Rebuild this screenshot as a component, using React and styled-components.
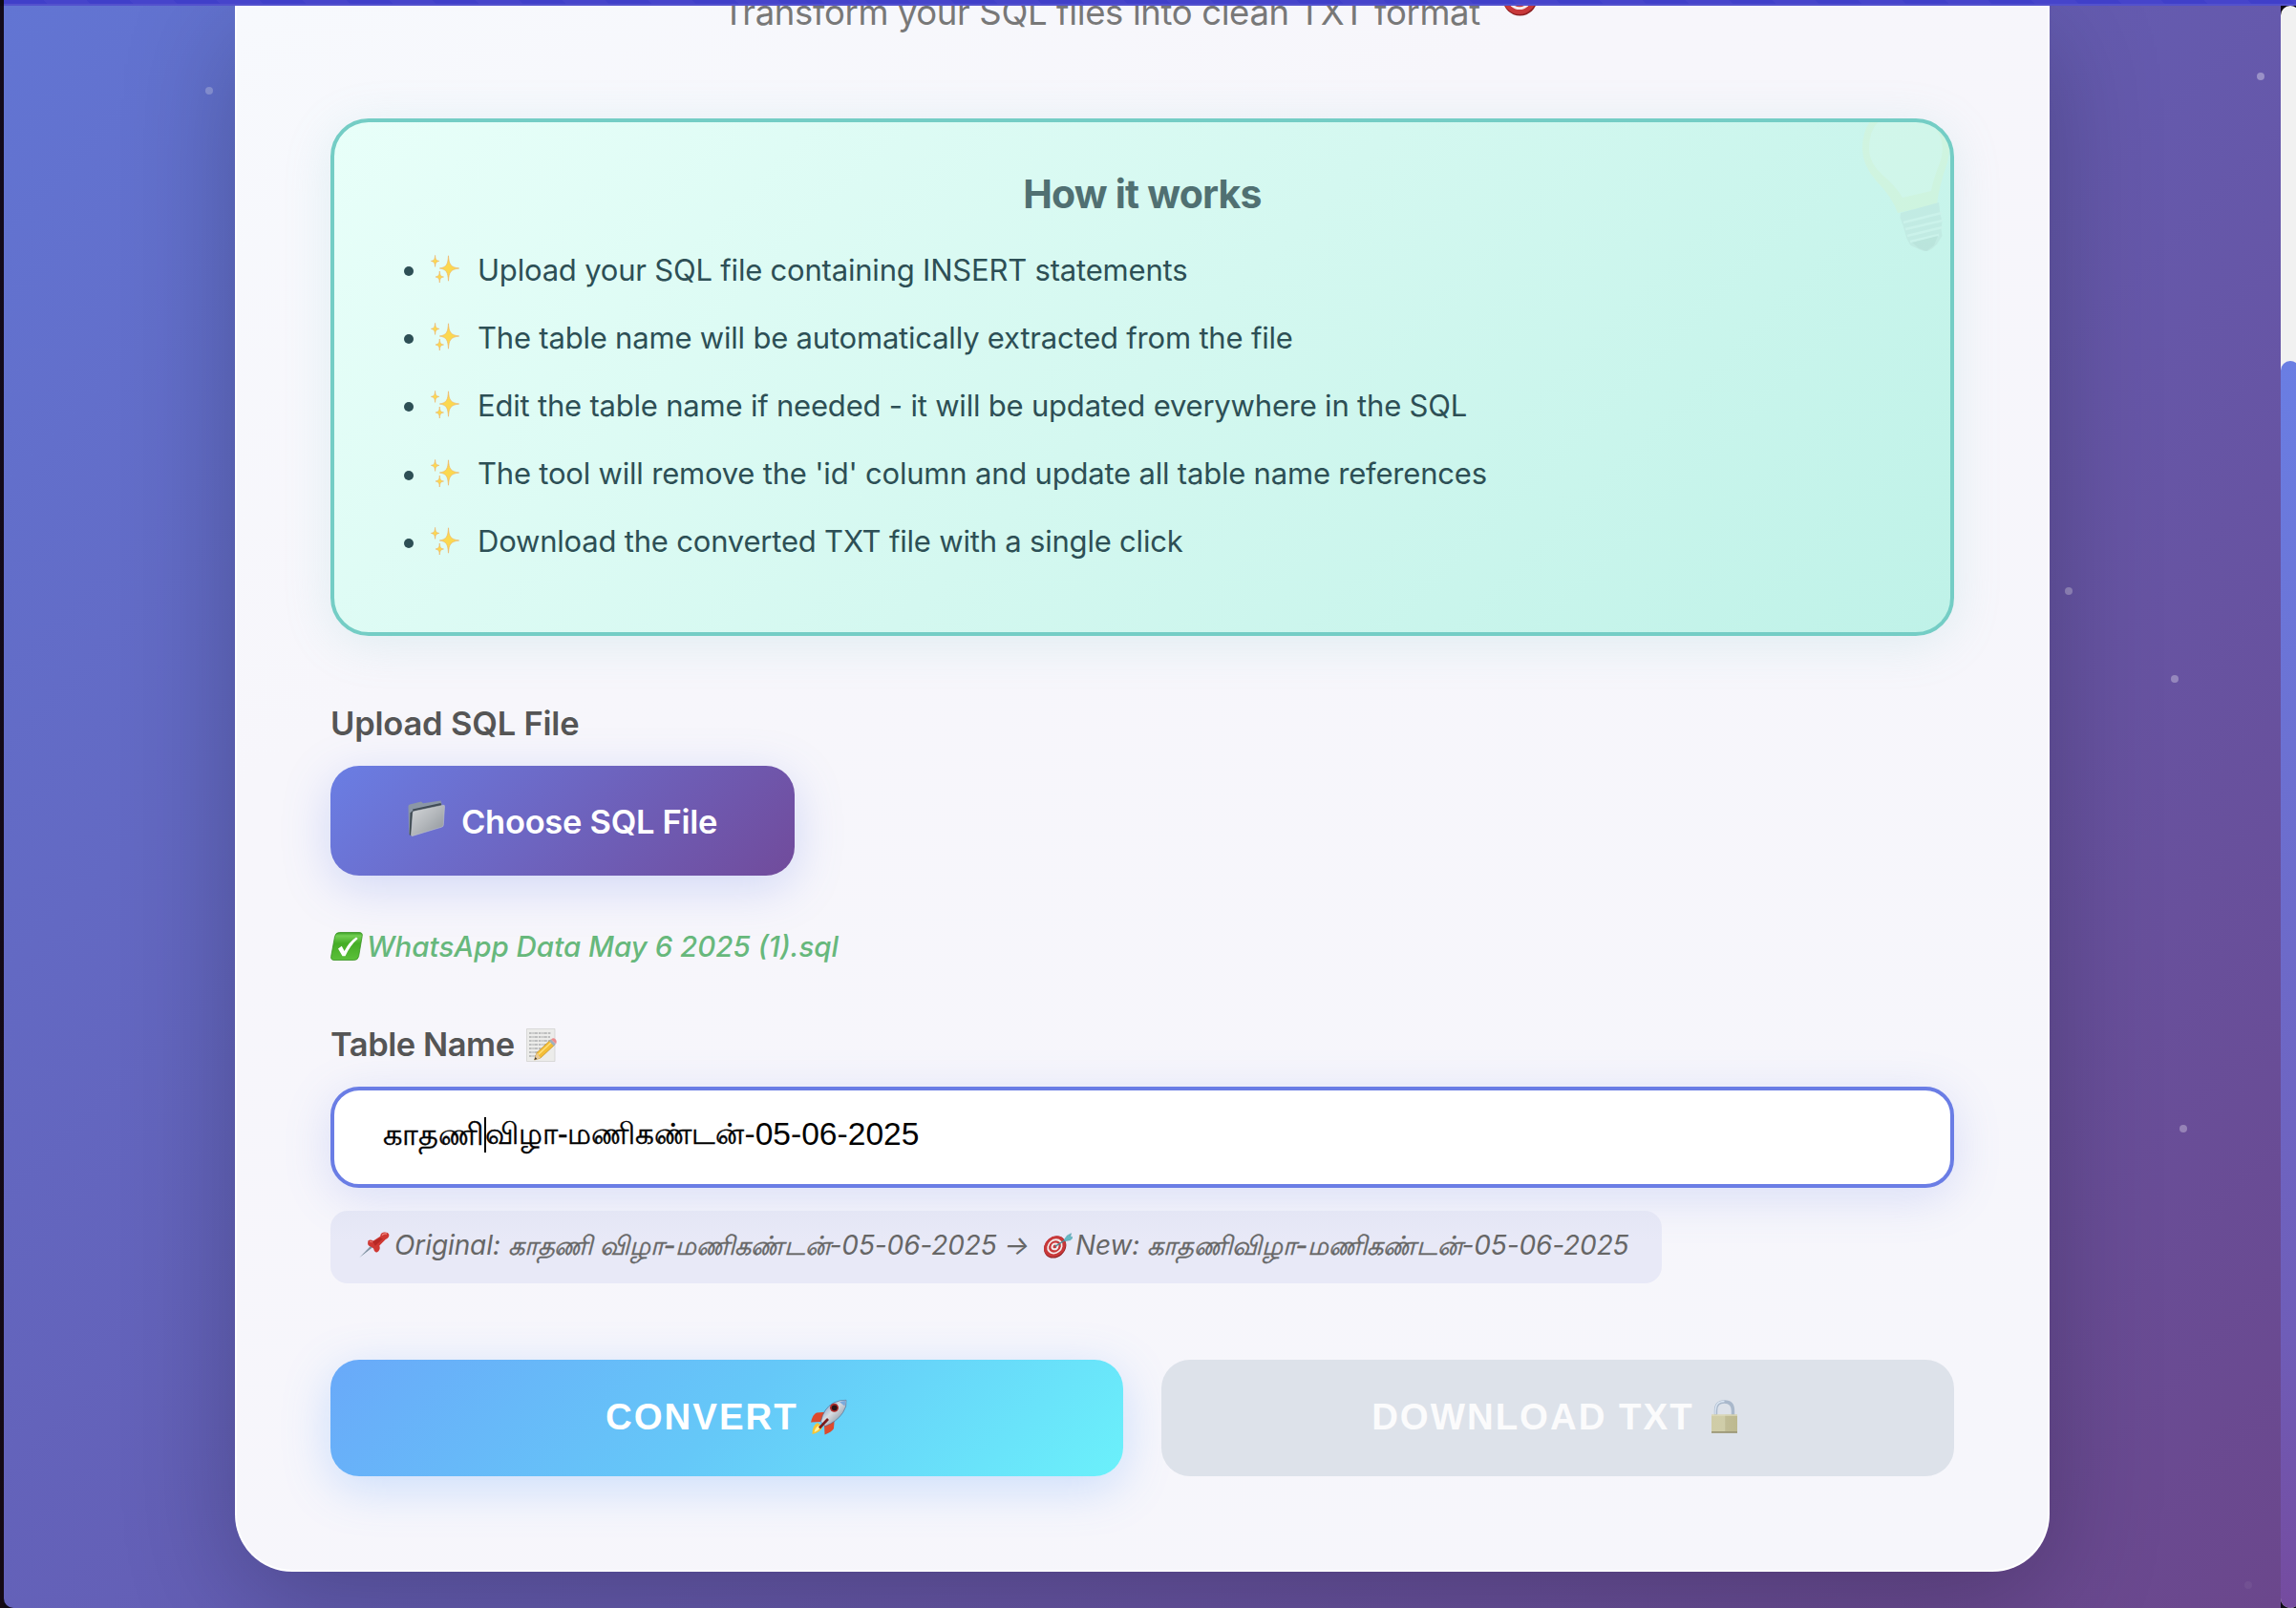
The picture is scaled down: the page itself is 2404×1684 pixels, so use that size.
import React from "react";
import styled, { createGlobalStyle, css } from "styled-components";

const sans = `Inter, "Noto Sans", "Liberation Sans", sans-serif`;
const arial = `"Liberation Sans", Arial, "Noto Sans", sans-serif`;

const GlobalStyle = createGlobalStyle`
  *, *::before, *::after { box-sizing: border-box; }
  body { margin: 0; background: #0e0a16; font-family: ${sans}; overflow: hidden; }
  svg { display: block; flex: none; }
`;

/* ---------- frame ---------- */

const Frame = styled.div`
  width: 2404px;
  height: 1684px;
  overflow: hidden;
  display: grid;
  grid-template-rows: 6px 1fr;
  background: #0e0a16;
`;

const TopBar = styled.div`
  margin-left: 4px;
  border-bottom: 2px solid #5351cd;
  background: repeating-linear-gradient(45deg, #403fc9 0 32px, #4644cb 32px 64px);
`;

const Viewport = styled.div`
  display: grid;
  grid-template-columns: 4px 2384px 20px;
  min-height: 0;
`;

const WindowEdge = styled.div`
  background: linear-gradient(#130b1b, #150a14);
`;

const Page = styled.main`
  position: relative;
  overflow: hidden;
  border-bottom-left-radius: 10px;
  padding: 0 242px 38px;
  background: linear-gradient(135deg, #6275d3 0%, #645db3 50%, #6b478c 100%);
`;

const Star = styled.i`
  position: absolute;
  left: ${(p) => p.$x}px;
  top: ${(p) => p.$y}px;
  width: 8px;
  height: 8px;
  border-radius: 50%;
  background: rgba(255, 255, 255, ${(p) => p.$alpha});
`;

const ScrollTrack = styled.div`
  padding-top: 372px;
  border-radius: 10px;
  background: #f1f1f1;
`;

const ScrollThumb = styled.div`
  height: 1306px;
  border-radius: 10px;
  background: linear-gradient(180deg, #6a7ee3, #6f5db8 78%, #754b9f);
`;

/* ---------- card ---------- */

const Card = styled.section`
  position: relative;
  height: 1640px;
  padding: 0 98px;
  border: 2px solid rgba(255, 255, 255, 0.95);
  border-top: 0;
  border-radius: 0 0 60px 60px;
  background: linear-gradient(150deg, #f7f9fd 0%, #f7f6fb 30%, #f6f6fb 100%);
  box-shadow: 0 30px 120px rgba(0, 0, 0, 0.24);
`;

const Header = styled.header`
  height: 118px;
  overflow: hidden;
`;

const Subtitle = styled.p`
  display: flex;
  justify-content: center;
  gap: 22px;
  margin: -13px 0 0;
  font-size: 36.5px;
  line-height: 40px;
  letter-spacing: -0.37px;
  color: #787878;
  white-space: nowrap;

  svg { margin: -18px 14px 0 0; }
`;

const InfoBox = styled.section`
  position: relative;
  height: 542px;
  padding-top: 51px;
  overflow: hidden;
  border: 4px solid #74cdc5;
  border-radius: 40px;
  background: linear-gradient(135deg, #e8fff9 0%, #d4f8f0 50%, #bff2e8 100%);
`;

const InfoShadow = styled.div`
  border-radius: 40px;
  box-shadow: 0 8px 50px rgba(120, 200, 200, 0.18);
`;

const InfoTitle = styled.h3`
  margin: 0;
  font-size: 41px;
  font-weight: 700;
  line-height: 48px;
  letter-spacing: -0.8px;
  text-align: center;
  color: #507072;
`;

const Steps = styled.ul`
  margin: 19.5px 0 0;
  padding: 0 0 0 73px;
  list-style: none;
`;

const Step = styled.li`
  display: flex;
  align-items: center;
  height: 71.2px;
  font-size: 31px;
  line-height: 71.2px;
  letter-spacing: -0.2px;
  color: #2d4f55;

  &::before {
    content: "";
    width: 10px;
    height: 10px;
    margin: 4px 18px 0 0;
    border-radius: 50%;
    background: currentColor;
  }

  svg { margin-right: 19px; }
`;

const BulbCorner = styled.div`
  position: absolute;
  top: -17px;
  right: -3px;
  opacity: 0.17;
`;

/* ---------- form ---------- */

const Label = styled.label`
  display: flex;
  align-items: center;
  gap: 12px;
  height: 44px;
  margin-top: ${(p) => p.$top}px;
  font-size: 34.5px;
  font-weight: 600;
  line-height: 44px;
  letter-spacing: ${(p) => p.$tracking}px;
  color: #555;
`;

const FileButton = styled.button`
  display: flex;
  align-items: center;
  gap: 17px;
  width: 486px;
  height: 115px;
  margin-top: 21.6px;
  padding: 0 0 0 81px;
  border: 0;
  border-radius: 30px;
  background: linear-gradient(135deg, #6a7ee4 0%, #6e5cb4 65%, #714b9b 100%);
  box-shadow: 0 12px 50px rgba(102, 126, 234, 0.26);
  font: 600 34.5px/44px ${sans};
  letter-spacing: -0.3px;
  color: #fff;

  span { margin-top: 3px; }
  svg { margin-top: -4px; }
`;

const FileName = styled.div`
  display: flex;
  align-items: center;
  gap: 4px;
  height: 40px;
  margin-top: 54.3px;
  font-size: 29.5px;
  font-style: italic;
  font-weight: 500;
  line-height: 40px;
  letter-spacing: 0;
  color: #67b87c;
`;

const NameField = styled.div`
  display: flex;
  align-items: center;
  height: 106px;
  margin-top: 21.7px;
  padding: 0 51px 6px;
  border: 4px solid #6a7de5;
  border-radius: 30px;
  background: #fff;
  box-shadow: 0 10px 50px rgba(102, 126, 234, 0.2);
  font-family: ${arial};
  font-size: 33.6px;
  line-height: 44px;
  color: #000;
  white-space: nowrap;
`;

const Caret = styled.i`
  width: 2px;
  height: 37px;
  margin: 1px -1px 0 0;
  background: #000;
`;

const Tamil = styled.span`
  font-size: ${(p) => p.$size}px;
  line-height: 1;
  -webkit-text-stroke: 0.45px currentColor;
`;

const Preview = styled.div`
  display: flex;
  align-items: center;
  width: 1394px;
  height: 76px;
  margin-top: 24px;
  padding: 0 0 3px 30px;
  border-radius: 18px;
  background: linear-gradient(#e4e6f5, #e8e9f7 40%);
  font-size: 28px;
  font-style: italic;
  line-height: 40px;
  letter-spacing: -0.1px;
  color: #666;
  white-space: pre;
`;

const PreviewText = styled.span`
  flex: none;
  width: ${(p) => (p.$width ? `${p.$width}px` : "auto")};
  margin-left: ${(p) => p.$left}px;
`;

const Actions = styled.div`
  display: grid;
  grid-template-columns: 1fr 1fr;
  gap: 40px;
  margin-top: 80px;
`;

const ActionButton = styled.button`
  display: flex;
  align-items: center;
  justify-content: center;
  height: 122px;
  padding: 0 0 1px;
  border: 0;
  border-radius: 30px;
  background: #dde2ea;
  font: 700 38.4px/46px ${arial};
  letter-spacing: 2px;
  color: #fbfbfc;
  white-space: pre;

  ${(p) =>
    p.$primary &&
    css`
      background: linear-gradient(135deg, #69a9f9 0%, #65c8f8 50%, #6bf1fb 100%);
      box-shadow: 0 12px 50px rgba(79, 152, 254, 0.26);
      color: #fff;
    `}
`;

/* ---------- drawings ---------- */

const Sparkles = () => (
  <svg width="30" height="30" viewBox="0 0 30 30" fill="#fbd84f" stroke="#f0ae62" strokeWidth=".6">
    <path d="M18.500.8C19.200 10 20.500 12.700 29.700 14 20.500 15.300 19.200 18 18.500 27.200 17.800 18 16.800 15.300 9.300 14 16.800 12.700 17.800 10 18.500.8z" />
    <path d="M4.600.4c.3 4 .9 5.400 4.200 6-3.300.6-3.900 2-4.200 6-.3-4-.9-5.400-4.200-6 3.300-.6 3.900-2 4.200-6z" />
    <path d="M9.300 17c.3 4 .9 5.400 4.200 6-3.300.6-3.900 2-4.200 6-.3-4-.9-5.400-4.200-6 3.300-.6 3.900-2 4.200-6z" />
  </svg>
);

const Folder = () => (
  <svg width="39" height="38" viewBox="0 0 39 38">
    <defs>
      <linearGradient id="folderFront" x1="0" y1="0" x2="1" y2="1">
        <stop offset="0" stopColor="#d5d8da" />
        <stop offset=".5" stopColor="#b3b7bb" />
        <stop offset="1" stopColor="#8d9398" />
      </linearGradient>
    </defs>
    <path d="M.5 6.500Q.5 5 2 4.600L14 1.500l2 1.800L34.500.4l1.300 4L5 14 2.800 37 1.200 35z" fill="#8b97a6" />
    <path d="M5 9.500 34.500 3l1 3L6 14z" fill="#414c57" />
    <path d="M2.500 13.500 5 11l0 8L3.500 37.500 1.700 36z" fill="#3e4a52" />
    <path d="M5.200 13.500Q5.300 12 6.800 11.600L37 5.200q1.700-.2 1.500 1.400L37.300 26q-.1 1.600-1.600 2.100L5 37.400q-1.600.5-1.500-1.200z" fill="url(#folderFront)" stroke="#c9cdd0" strokeWidth=".5" />
  </svg>
);

const Check = () => (
  <svg width="34" height="30" viewBox="0 0 34 30">
    <defs>
      <linearGradient id="checkFill" x1="0" y1="0" x2="0" y2="1">
        <stop offset="0" stopColor="#3a9f22" />
        <stop offset=".12" stopColor="#72cf53" />
        <stop offset=".4" stopColor="#45ad25" />
        <stop offset="1" stopColor="#5bc03a" />
      </linearGradient>
    </defs>
    <path d="M9.500.5H30q4 0 3.200 4L29.600 25.500q-.8 4-4.800 4H4q-4 0-3.300-4L4.600 4.500Q5.500.5 9.500.5z" fill="url(#checkFill)" stroke="#399323" strokeWidth=".8" />
    <path d="M8 17.500 11.800 14.800l2.800 5.200Q19.500 10.500 27 5.600l1.700 1.300Q20.500 14 15.500 25.300h-3z" fill="#fff" />
  </svg>
);

const Memo = () => (
  <svg width="32" height="35" viewBox="0 0 32 35">
    <path d="M.5.5h29.500v34H.5z" fill="#ececea" stroke="#cfcfcd" strokeWidth=".7" />
    <path d="M3 5h23M3 9h22M3 13h23M3 17h18M3 21h14M3 25h10M3 29h7" stroke="#8d8f92" strokeWidth="1.100" strokeDasharray="2.600 .8 1.300 .7 3.500 1" fill="none" />
    <path d="M8.500 33 11 25.500 25.500 12 30 17 15 31z" fill="#f3bd36" stroke="#b78422" strokeWidth=".6" />
    <path d="M12.500 27.500 27 14" stroke="#ffe07a" strokeWidth="1.500" />
    <path d="M8.500 33 11 25.500l4 5.500z" fill="#e8c99a" />
    <path d="M8.500 33l1-3 1.700 2z" fill="#333" />
    <path d="M24 13.300 26 11.500l4.800 5-2 1.900z" fill="#9fb0be" />
    <path d="M26 11.500q2.500-2.200 4.500-.3t.6 5z" fill="#ec8a8b" />
  </svg>
);

const Pin = () => (
  <svg width="32" height="28" viewBox="0 0 32 28">
    <path d="M.4 27 13.500 13.300l2 2z" fill="#8294a3" />
    <path d="M9.500 9.300q2.200-1.600 5.300.2l7.400-4.800Q22.400 1 26 .5q4.300-.5 5.300 2.300.6 3.200-3.600 5.300L21.300 14.500q1.500 4.500-2.600 7-2.600.4-3.500-3.800-1.300-1.700-3.800-2.500-3.200-.6-1.900-5.900z" fill="#cf3833" />
    <path d="M14.500 10.500 22 6.200l3 1-8.200 7.600z" fill="#a9221f" opacity=".65" />
    <path d="M24 3.500q2-2.200 5-1.400" stroke="#f08a82" strokeWidth="1.400" fill="none" />
    <path d="M11 10.500q1.500-.7 3 .4" stroke="#f08a82" strokeWidth="1" fill="none" />
  </svg>
);

const Target = ({ size = 30, slant }) => (
  <svg width={size} height={size * 0.84} viewBox="0 0 50 42">
    <g transform={slant ? "skewX(-10) translate(6 0)" : undefined}>
      <circle cx="19.500" cy="23.500" r="18" fill="#8e2023" />
      <circle cx="19" cy="22.500" r="17.500" fill="#c8383a" />
      <circle cx="19" cy="22.500" r="12.600" fill="#f4ecec" />
      <circle cx="19" cy="22.500" r="9.800" fill="#c8383a" />
      <circle cx="19" cy="22.500" r="6.200" fill="#f4ecec" />
      <circle cx="19" cy="22.500" r="3" fill="#c8383a" />
      <path d="M19.500 22.500 38 9" stroke="#4b8c97" strokeWidth="2.200" />
      <path d="M32 12 36 4.500 42 1l-.5 5.500 5.500.5-4.500 5-8 1.500z" fill="#65b9c4" stroke="#3f8e9c" strokeWidth=".6" />
    </g>
  </svg>
);

const Rocket = () => (
  <svg width="39.600" height="38" viewBox="0 0 39.600 38">
    <defs>
      <linearGradient id="rocketBody" x1="0" y1="0" x2="1" y2="1">
        <stop offset="0" stopColor="#4f83c4" />
        <stop offset=".45" stopColor="#d8dde2" />
        <stop offset=".7" stopColor="#a5adb7" />
        <stop offset="1" stopColor="#3f5f94" />
      </linearGradient>
    </defs>
    <path d="M1 24.500Q3 16 7 14.500l9.500-.8L11 24z" fill="#dd4a2c" />
    <path d="M15.500 37.500Q23 34.500 25 31l.7-9.500L15 27.500z" fill="#dd4a2c" />
    <path d="M2.500 37Q2.500 27.500 8 25l5 4.500Q11.500 35 2.500 37z" fill="#f7c534" />
    <path d="M4.500 35Q5.500 30 9 28l1.800 2Q9 33.500 4.500 35z" fill="#fff0a0" />
    <path d="M11.500 24Q14 10 25 4 32 .8 38 1.300 39 8 34.500 14.500 28 24 16 28.500z" fill="url(#rocketBody)" stroke="#46658f" strokeWidth=".6" />
    <path d="M10 30.500 19 21" stroke="#7b1b1b" strokeWidth="2.600" />
    <circle cx="25.500" cy="9.300" r="4.500" fill="#b02b28" />
    <circle cx="25.700" cy="9.300" r="2.900" fill="#2a1216" />
    <path d="M31 3.300Q35 2 37.300 2q.2 2.500-.9 5.500z" fill="#7ba9dc" />
  </svg>
);

const Lock = () => (
  <svg width="39.600" height="36" viewBox="-5.500 0 39.600 36">
    <defs>
      <linearGradient id="lockFill" x1="0" y1="0" x2="1" y2="0">
        <stop offset="0" stopColor="#d0cca6" />
        <stop offset=".5" stopColor="#cfcda9" />
        <stop offset=".55" stopColor="#c0bc95" />
        <stop offset="1" stopColor="#bdb98f" />
      </linearGradient>
    </defs>
    <path d="M5 16v-4.500Q5 2 14 2t9 9.500V16" fill="none" stroke="#a9b8cb" strokeWidth="3.400" />
    <path d="M4.600 15v-3.500Q4.600 1.500 14 1.500" fill="none" stroke="#dbe6f3" strokeWidth="1.300" />
    <path d="M.5 15.500h27V34.500H.5z" fill="url(#lockFill)" />
    <path d="M.5 15.500h27v1.200H.5z" fill="#dedbbd" />
    <path d="M.5 33h27v1.800H.5z" fill="#9c9878" />
  </svg>
);

const Bulb = () => (
  <svg width="100" height="152" viewBox="0 0 100 152">
    <path d="M5 45Q5 12 32 4 64-5 86 15q15 16 8 44-9 26-11 44L42 112Q36 95 20 79 5 62 5 45z" fill="#eef0a6" />
    <path d="M12 45Q12 16 34 10 62 2 79 20q14 15 8 37-8 20-10 32L47 96Q40 84 26 72 12 60 12 45z" fill="#f0fbe0" />
    <path d="M45 112 85 101l1.500 12 2 8-1 8 1 7-5 8-5 5-7 4-7-3-9-4-4-7-2-7-2-7-3-8z" fill="#a8bdbb" />
    <path d="M48 122 88 112M50 129l39-9M52 136l37-9M55 142l30-7" stroke="#d9e8e6" strokeWidth="2.500" />
    <path d="M57 143l27-7-4 10-8 6-8-3z" fill="#7f9896" />
  </svg>
);

/* ---------- content ---------- */

const stars = [
  { x: 211, y: 85, alpha: 0.26 },
  { x: 2359, y: 70, alpha: 0.34 },
  { x: 2158, y: 609, alpha: 0.3 },
  { x: 2269, y: 701, alpha: 0.3 },
  { x: 2278, y: 1172, alpha: 0.3 },
  { x: 2346, y: 1650, alpha: 0.05 },
];

const steps = [
  "Upload your SQL file containing INSERT statements",
  "The table name will be automatically extracted from the file",
  "Edit the table name if needed - it will be updated everywhere in the SQL",
  "The tool will remove the 'id' column and update all table name references",
  "Download the converted TXT file with a single click",
];

export default function App() {
  return (
    <Frame>
      <GlobalStyle />
      <TopBar />
      <Viewport>
        <WindowEdge />
        <Page>
          {stars.map((s) => (
            <Star key={s.y} $x={s.x} $y={s.y} $alpha={s.alpha} />
          ))}
          <Card>
            <Header>
              <Subtitle>
                Transform your SQL files into clean TXT format
                <Target size={50} />
              </Subtitle>
            </Header>

            <InfoShadow>
              <InfoBox>
                <BulbCorner>
                  <Bulb />
                </BulbCorner>
                <InfoTitle>How it works</InfoTitle>
                <Steps>
                  {steps.map((text) => (
                    <Step key={text}>
                      <Sparkles />
                      {text}
                    </Step>
                  ))}
                </Steps>
              </InfoBox>
            </InfoShadow>

            <Label $top={70.4} $tracking={-0.2}>Upload SQL File</Label>
            <FileButton>
              <Folder />
              <span>Choose SQL File</span>
            </FileButton>
            <FileName>
              <Check />
              WhatsApp Data May 6 2025 (1).sql
            </FileName>

            <Label $top={60.8} $tracking={-0.45}>
              Table Name
              <Memo />
            </Label>
            <NameField>
              <Tamil $size={32.05}>காதணி</Tamil>
              <Caret />
              <Tamil $size={31.4}>விழா-மணிகண்டன்</Tamil>
              -05-06-2025
            </NameField>

            <Preview>
              <Pin />
              <PreviewText $left={5} $width={678}>
                Original: <Tamil $size={27.2}>காதணி விழா-மணிகண்டன்</Tamil>-05-06-2025 →
              </PreviewText>
              <Target size={32} slant />
              <PreviewText $left={3}>
                New: <Tamil $size={27.2}>காதணிவிழா-மணிகண்டன்</Tamil>-05-06-2025
              </PreviewText>
            </Preview>

            <Actions>
              <ActionButton $primary>
                {"CONVERT "}
                <Rocket />
              </ActionButton>
              <ActionButton disabled>
                {"DOWNLOAD TXT "}
                <Lock />
              </ActionButton>
            </Actions>
          </Card>
        </Page>
        <ScrollTrack>
          <ScrollThumb />
        </ScrollTrack>
      </Viewport>
    </Frame>
  );
}
